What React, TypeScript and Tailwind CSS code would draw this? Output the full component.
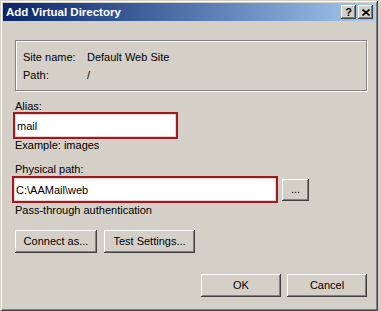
import React from 'react';

const raised =
  'shadow-[inset_-1px_-1px_0_#404040,inset_1px_1px_0_#ffffff,inset_-2px_-2px_0_#808080]';

const Button: React.FC<{ label: string; className?: string }> = ({ label, className }) => (
  <div
    className={`flex items-center justify-center bg-[#d4d0c8] text-[11px] leading-[13px] text-black ${raised} ${className ?? ''}`}
  >
    {label}
  </div>
);

const TitleButton: React.FC<{ children: React.ReactNode }> = ({ children }) => (
  <div className={`flex h-[14px] w-[15px] items-center justify-center bg-[#d4d0c8] ${raised}`}>
    {children}
  </div>
);

const App: React.FC = () => {
  return (
    <div className="h-[311px] w-[381px] bg-[#d4d0c8] font-['Liberation_Sans',Arial,sans-serif]">
      <div className="flex h-[311px] w-[378px] flex-col p-[3px] shadow-[inset_1px_1px_0_#d4d0c8,inset_-1px_-1px_0_#404040,inset_2px_2px_0_#ffffff,inset_-2px_-2px_0_#808080]">
        {/* title bar */}
        <div className="flex h-[18px] items-center justify-between bg-gradient-to-r from-[#0a246a] to-[#a6caf0] pl-[3px] pr-[2px]">
          <span className="text-[11.5px] font-bold leading-[14px] text-white">Add Virtual Directory</span>
          <div className="flex gap-[2px]">
            <TitleButton>
              <span className="text-[11px] font-bold leading-[11px] text-black">?</span>
            </TitleButton>
            <TitleButton>
              <svg width="8" height="7" viewBox="0 0 8 7">
                <path d="M0.5 0.5 L7.5 6.5 M7.5 0.5 L0.5 6.5" stroke="#000" strokeWidth="1.6" />
              </svg>
            </TitleButton>
          </div>
        </div>

        {/* body */}
        <div className="flex w-[364px] flex-col pl-[12px] text-[11px] leading-[13px] text-black">
          <div className="mt-[19px] flex h-[51px] w-[352px] flex-col gap-[5px] border border-[#808080] pl-[7px] pt-[10px] shadow-[inset_1px_1px_0_#ffffff,1px_1px_0_#ffffff]">
            <div className="flex">
              <span className="w-[64px]">Site name:</span>
              <span>Default Web Site</span>
            </div>
            <div className="flex">
              <span className="w-[64px]">Path:</span>
              <span>/</span>
            </div>
          </div>

          <div className="mt-[9px]">Alias:</div>
          <div className="-ml-[2px] mt-[-1px] flex h-[27px] w-[165px] items-center border-2 border-[#9e1a1e] bg-white pl-[2px] pt-[2px] shadow-[inset_0_0_0_1px_#ead2d2]">
            mail
          </div>
          <div className="mt-[0px]">Example: images</div>

          <div className="mt-[11px]">Physical path:</div>
          <div className="-ml-[3px] flex items-center gap-[4px]">
            <div className="flex h-[27px] w-[266px] items-center border-2 border-[#9e1a1e] bg-white pl-[2px] pt-[2px] shadow-[inset_0_0_0_1px_#ead2d2]">
              C:\AAMail\web
            </div>
            <Button label="..." className="h-[22px] w-[27px]" />
          </div>
          <div className="mt-[1px]">Pass-through authentication</div>

          <div className="mt-[13px] flex gap-[7px]">
            <Button label="Connect as..." className="h-[23px] w-[82px]" />
            <Button label="Test Settings..." className="h-[23px] w-[91px]" />
          </div>

          <div className="mt-[21px] flex w-[352px] justify-end gap-[6px]">
            <Button label="OK" className="h-[23px] w-[80px]" />
            <Button label="Cancel" className="h-[23px] w-[80px]" />
          </div>
        </div>
      </div>
    </div>
  );
};

export default App;
